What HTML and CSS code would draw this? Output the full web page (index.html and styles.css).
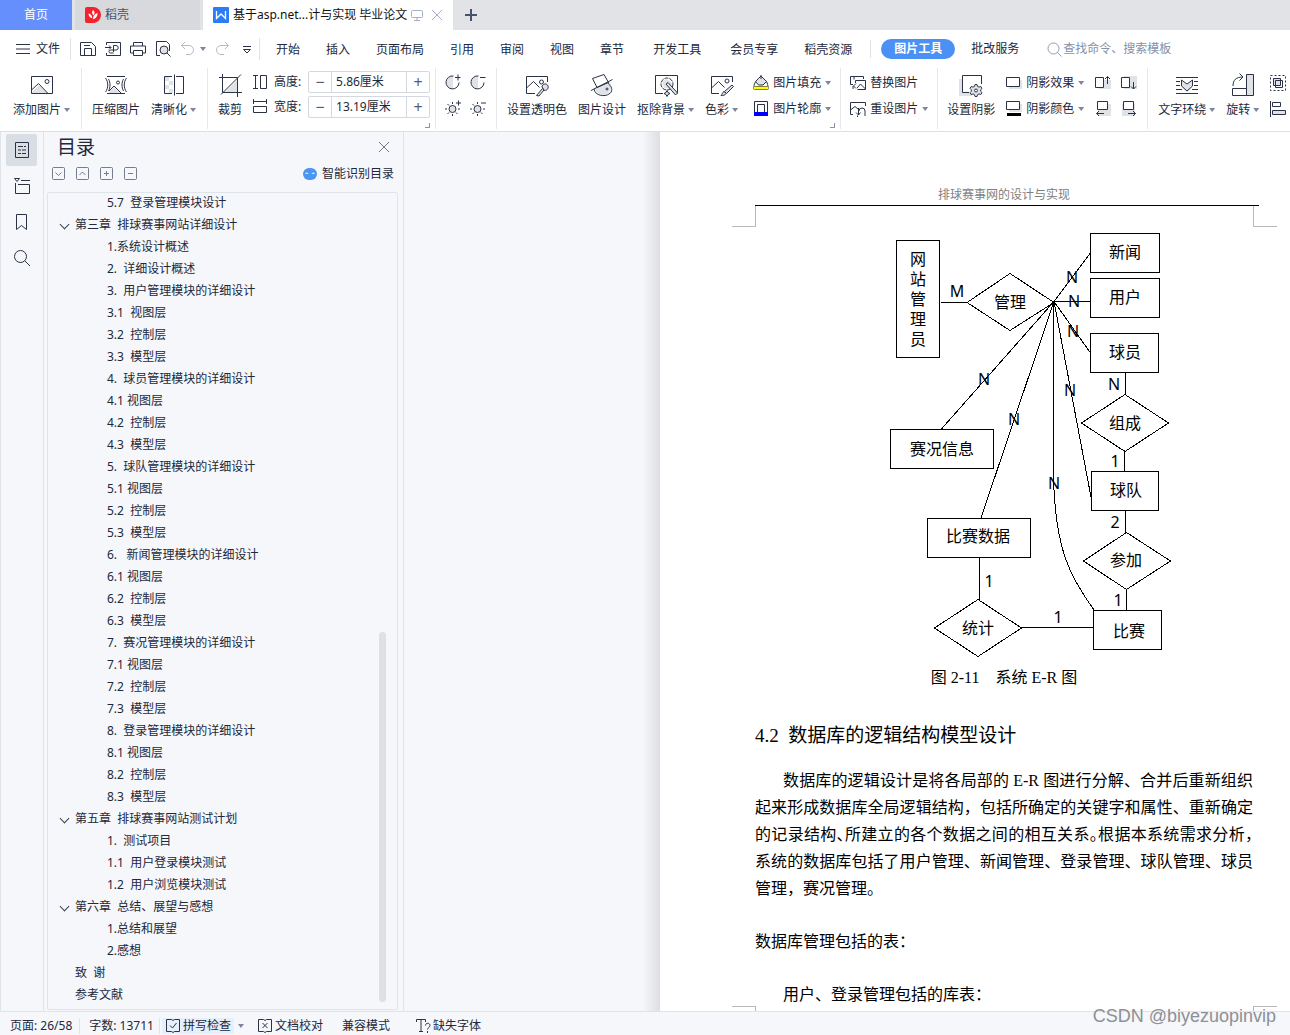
FILE: index.html
```html
<!DOCTYPE html>
<html lang="zh-CN">
<head>
<meta charset="utf-8">
<title>基于asp.net…计与实现 毕业论文</title>
<link rel="stylesheet" href="styles.css">
</head>
<body>
<header class="tabs">
  <button class="tab tab-home">首页</button>
  <button class="tab tab-docer">
    <svg width="16" height="16" viewBox="0 0 16 16"><path d="M0 2a2 2 0 0 1 2-2h6a8 8 0 0 1 0 16H2a2 2 0 0 1-2-2z" fill="#f5222d"/><path d="M8 3c2 1.600 2 3.600.4 5.600C6.700 6.600 6.700 4.600 8 3zM3.500 6.500c2.400.3 3.600 2 3.800 4.800C5 10.800 3.600 9.200 3.500 6.500zM12.500 6c.2 3.200-1.400 5.600-4.600 6.300C8.100 9 9.600 6.800 12.500 6z" fill="#fff"/></svg>
    稻壳</button>
  <div class="tab tab-doc">
    <svg width="16" height="16" viewBox="0 0 16 16"><rect width="16" height="16" rx="1" fill="#2a7df5"/><path d="M3.500 4v7.500L8 7l4.500 4.500V4" fill="none" stroke="#fff" stroke-width="1.300"/></svg>
    <span>基于asp.net...计与实现 毕业论文</span>
    <svg class="screen" width="12" height="12" viewBox="0 0 12 12"><path d="M1.500 1.500h9a1 1 0 0 1 1 1v5a1 1 0 0 1-1 1h-9a1 1 0 0 1-1-1v-5a1 1 0 0 1 1-1zM6 8.500v3M3 11.500h6"/></svg>
    <button class="close" aria-label="关闭"><svg width="12" height="12" viewBox="0 0 12 12"><path d="M1 1l10 10M11 1L1 11"/></svg></button>
  </div>
  <button class="add-tab" aria-label="新建"><svg width="12" height="12" viewBox="0 0 12 12"><path d="M6 0v12M0 6h12"/></svg></button>
</header>

<nav class="menu">
  <button class="file"><svg width="14" height="10" viewBox="0 0 14 10"><path d="M0 .5h14M0 5h14M0 9.500h14"/></svg>文件</button>
  <div class="quick">
    <button aria-label="保存"><svg width="16" height="16" viewBox="0 0 16 16"><path d="M.5 1.500h11l4 4v9H.5zM4.500 14.500v-7h7v7M4 4.500h6" /></svg></button>
    <button aria-label="输出为PDF"><svg width="16" height="16" viewBox="0 0 16 16"><path d="M1.500 4V1.500h14v13h-14V12M0 6.500h6M4 4.500l2 2-2 2M8.500 11V4.500H11a2 2 0 0 1 0 4.500H5.500a1.500 1.500 0 0 0 0 3h3"/></svg></button>
    <button aria-label="打印"><svg width="16" height="16" viewBox="0 0 16 16"><path d="M3.500 5V1.500h9V5M3.500 12h-3V5h15v7h-3M3.500 9.500h9v5h-9z"/></svg></button>
    <button aria-label="打印预览"><svg width="16" height="16" viewBox="0 0 16 16"><path d="M5 14.500H1.500v-14h10l3 3V10M12 12l3.500 3.500"/><circle cx="9" cy="9" r="4" fill="#e0e2e5"/></svg></button>
    <button aria-label="撤销" class="faded"><svg width="16" height="16" viewBox="0 0 16 16"><path d="M5 1L1.500 4.500 5 8M1.500 4.500H9a4.500 4.500 0 0 1 0 9H6"/></svg></button>
    <i class="caret"></i>
    <button aria-label="恢复" class="faded"><svg width="16" height="16" viewBox="0 0 16 16"><path d="M11 1l3.500 3.500L11 8M14.500 4.500H7a4.500 4.500 0 0 0 0 9h3"/></svg></button>
    <button aria-label="更多"><svg width="16" height="16" viewBox="0 0 16 16"><path d="M4 5.500h8M4.500 8.500l3.500 3.500 3.500-3.500z"/></svg></button>
  </div>
  <div class="menu-items">
    <button>开始</button><button>插入</button><button>页面布局</button><button>引用</button><button>审阅</button><button>视图</button><button>章节</button>
    <button class="roomy">开发工具</button><button class="roomy">会员专享</button><button>稻壳资源</button>
  </div>
  <div class="menu-tools">
    <button class="pill">图片工具</button>
    <button>批改服务</button>
  </div>
  <label class="search"><svg width="15" height="15" viewBox="0 0 15 15"><circle cx="6.500" cy="6.500" r="5.500"/><path d="M10.500 10.500l4 4"/></svg><input type="text" placeholder="查找命令、搜索模板" aria-label="查找命令"></label>
</nav>

<section class="ribbon">
  <div class="group">
    <button class="big"><svg width="24" height="24" viewBox="0 0 24 24"><path class="g" d="M2 19l7-7 9 8H2z"/><path d="M1.500 3.500h21v17h-21zM1.500 17l7-6.500 9.500 10"/><circle cx="17" cy="8.500" r="2"/></svg><span>添加图片<i class="caret"></i></span></button>
  </div>
  <div class="group">
    <button class="big"><svg width="24" height="24" viewBox="0 0 24 24"><path class="g" d="M5 19l5-5 6 6H5z"/><path d="M3 3.500h18M3 20.500h18M1.500 5c3 4 3 10 0 14M4.500 6c2 3.500 2 8.500 0 12M22.500 5c-3 4-3 10 0 14M19.500 6c-2 3.500-2 8.500 0 12M5 18l5-5 7 7"/><circle cx="14" cy="9.500" r="1.500"/></svg><span>压缩图片</span></button>
    <button class="big"><svg width="24" height="24" viewBox="0 0 24 24"><path class="g" d="M3 4h4v4H3zM7 8h4v4H7zM3 12h4v4H3zM7 16h4v4H7z"/><path d="M10 3.500H2.500v17H10M12.500 1.500v21M14 3.500h7.500v17H14"/></svg><span>清晰化<i class="caret"></i></span></button>
  </div>
  <div class="group crop">
    <button class="big"><svg width="24" height="24" viewBox="0 0 24 24"><path class="g" d="M7 19L19 7v12z"/><path d="M4.500 1v18.500H24M1 4.500h18.500V24M3 21.500L23 1.500"/></svg><span>裁剪</span></button>
    <div class="sizes">
      <label for="h"><svg width="14" height="16" viewBox="0 0 14 16"><path d="M0 1.500h5M2.500 1.500v13M0 14.500h5M7.500 1.500h6v13h-6z"/></svg>高度:</label>
      <div class="step"><button aria-label="减小高度">−</button><input id="h" type="text" value="5.86厘米"><button aria-label="增大高度">+</button></div>
      <label for="w"><svg width="14" height="16" viewBox="0 0 14 16"><path d="M.5 0v5M.5 2.500h13M13.500 0v5M.5 7.500h13v6H.5z"/></svg>宽度:</label>
      <div class="step"><button aria-label="减小宽度">−</button><input id="w" type="text" value="13.19厘米"><button aria-label="增大宽度">+</button></div>
    </div>
    <i class="corner"></i>
  </div>
  <div class="group tone">
    <button aria-label="增加对比度"><svg width="16" height="16" viewBox="0 0 16 16"><path class="g" d="M8 2v13a6.500 6.500 0 0 1 0-13z"/><path d="M8.500 2a6.500 6.500 0 1 0 5.500 6.500M10 3.500h5.500M13 .5v6"/></svg></button>
    <button aria-label="降低对比度"><svg width="16" height="16" viewBox="0 0 16 16"><path class="g" d="M8 2v13a6.500 6.500 0 0 1 0-13z"/><path d="M8.500 2a6.500 6.500 0 1 0 5.500 6.500M10 3.500h5.500"/></svg></button>
    <button aria-label="增加亮度"><svg width="16" height="16" viewBox="0 0 16 16"><circle class="gs" cx="7.500" cy="9" r="3.500"/><path d="M7.500 2v2M7.500 14v2M0 9h2M13 9h2M2.500 4l1.500 1.500M2.500 14L4 12.500M12.500 14L11 12.500M11 3h5M13.500.5v5"/></svg></button>
    <button aria-label="降低亮度"><svg width="16" height="16" viewBox="0 0 16 16"><circle class="gs" cx="7.500" cy="9" r="3.500"/><path d="M7.500 2v2M7.500 14v2M0 9h2M13 9h2M2.500 4l1.500 1.500M2.500 14L4 12.500M12.500 14L11 12.500M11 3h5"/></svg></button>
  </div>
  <div class="group style">
    <button class="big"><svg width="24" height="24" viewBox="0 0 24 24"><path d="M10 20.500H1.500v-17h21V9M1.500 15l7-6.500 6 6"/><circle cx="16.500" cy="9" r="2"/><path class="gs" d="M11.500 22.500l6-7 1.500 1.500-5 6zM17 14c0-3 4-4 5.500-2s.5 5.500-3 5.500z"/></svg><span>设置透明色</span></button>
    <button class="big"><svg width="24" height="24" viewBox="0 0 24 24"><path class="g" d="M5 15l15-6c2 3 2 8-2 11-5 4-12 1-13-5z"/><path d="M2.500 5.500L14 1.500l4.500 8L7 14.500zM1 17.500L22.500 6.500M4 16c1 7 11 8 15 5 4-2 3-7 1-8.500-1-1.500-2-2-2-3.500"/><circle cx="17" cy="16" r="1"/></svg><span>图片设计</span></button>
    <button class="big"><svg width="24" height="24" viewBox="0 0 24 24"><path d="M9 20.500H1.500v-18h22v18"/><path class="g" d="M8 8l5-2 5 4-2 6-6-1z"/><circle cx="13" cy="11" r="6" stroke-dasharray="4 1"/><path class="gs" d="M12 11l2-1.500L23.500 20l-2 2zM13 17.500l1 2 2 1-2 1-1 2-1-2-2-1 2-1z"/></svg><span>抠除背景<i class="caret"></i></span></button>
    <button class="big"><svg width="24" height="24" viewBox="0 0 24 24"><path d="M9 20.500H1.500v-17h21V9M1.500 15l7-6.500 6 6"/><circle cx="17" cy="8" r="2"/><path class="gs" d="M22 12l1.500 1.500-7 7-2-2zM14 18.500l2 2c-1 2-3 2-5 2 1.500-1 1-3 3-4z"/></svg><span>色彩<i class="caret"></i></span></button>
    <div class="pair">
      <button><svg width="16" height="16" viewBox="0 0 16 16"><path class="g" d="M3 6l6-4 5 4-4 4H6z"/><path d="M2.500 6.500L8 1l5.500 5.500L10 10H5.500zM8 0v4M1 12.500C1 10 1.500 8 3 6.500M15 12.500c0-2-.5-4-1.500-6"/><rect x=".5" y="11.500" width="15" height="3" rx="1" fill="#ff0" stroke="#808040"/></svg>图片填充<i class="caret"></i></button>
      <button><svg width="16" height="16" viewBox="0 0 16 16"><path d="M1.500 11V.5h13V11M4.500 11V3.500h7V11"/><path fill="#00f" stroke="none" d="M1 11h14v4H1z"/></svg>图片轮廓<i class="caret"></i></button>
    </div>
    <i class="corner"></i>
  </div>
  <div class="group change">
    <div class="pair">
      <button><svg width="16" height="16" viewBox="0 0 16 16"><path d="M4 4.500v-3M13.500 4V1.500H.5v8H3M6 8.500L3.500 11 6 13.500M3 11v3M5.500 8V5.500h10v9h-8M7 13l3.500-4 5 5"/></svg>替换图片</button>
      <button><svg width="16" height="16" viewBox="0 0 16 16"><path d="M3 13.500H.5v-12h15V5M.5 9L5 5.500 8 8M7.500 14.500V16M8.500 7v7M6 11.500l2.500 2.500 2-2.500M9 10a3 3 0 0 1 6 0v5"/></svg>重设图片<i class="caret"></i></button>
    </div>
  </div>
  <div class="group shadow">
    <button class="big"><svg width="24" height="24" viewBox="0 0 24 24"><path class="g" d="M0 6h4v14h9v3H0z"/><path d="M10 19.500H3.500v-17h19V11"/><path class="gs" d="M16 11.500h2l.5 1.800 1.500.8 1.800-.6 1.200 1.900-1.300 1.300v1.600l1.300 1.300-1.200 1.900-1.800-.6-1.500.8-.5 1.800h-2l-.5-1.800-1.500-.8-1.800.6-1.200-1.900 1.300-1.300v-1.600L11 15.400l1.200-1.900 1.800.6 1.500-.8z"/><circle cx="17" cy="17.500" r="1.500" fill="#fff"/></svg><span>设置阴影</span></button>
    <div class="pair">
      <button><svg width="16" height="16" viewBox="0 0 16 16"><path class="g" d="M3 5h13v9H3z"/><path fill="#fff" d="M.5 2.500h13v9H.5z"/></svg>阴影效果<i class="caret"></i></button>
      <button><svg width="16" height="16" viewBox="0 0 16 16"><path class="g" d="M3 3h13v8H3z"/><path fill="#fff" d="M.5.5h13v8H.5z"/><path fill="#000" stroke="none" d="M1 12h14v3H1z"/></svg>阴影颜色<i class="caret"></i></button>
    </div>
    <div class="nudges">
      <button aria-label="阴影上移"><svg width="16" height="16" viewBox="0 0 16 16"><path class="g" d="M4 5h12v9H4z"/><path fill="#fff" d="M.5 2.500h8v10h-8z"/><path d="M12.500 9V1.500M10 4l2.500-2.500L15 4"/></svg></button>
      <button aria-label="阴影下移"><svg width="16" height="16" viewBox="0 0 16 16"><path class="g" d="M3 1h13v13H3z"/><path fill="#fff" d="M.5 2.500h8v10h-8z"/><path d="M12.500 7v7M10 11.500l2.500 2.500 2.500-2.500"/></svg></button>
      <button aria-label="阴影左移"><svg width="16" height="16" viewBox="0 0 16 16"><path class="g" d="M3 3h13v12H3z"/><path fill="#fff" d="M2.500.5h10v8h-10z"/><path d="M9 12.500H1.500M4 10l-2.500 2.500L4 15"/></svg></button>
      <button aria-label="阴影右移"><svg width="16" height="16" viewBox="0 0 16 16"><path class="g" d="M1 3h13v12H1z"/><path fill="#fff" d="M2.500.5h10v8h-10z"/><path d="M7 12.500h7.500M12 10l2.500 2.500L12 15"/></svg></button>
    </div>
  </div>
  <div class="group arrange">
    <button class="big"><svg width="24" height="24" viewBox="0 0 24 24"><path class="g" d="M7 8l5 3 5-3v6l-5 5-5-5z"/><path d="M1 4.500h22M1 8.500h4M19 8.500h4M1 12.500h4M19 12.500h4M1 16.500h6M17 16.500h6M1 20.500h22M6.500 7l5.500 4 5.500-4v6L12 18l-5.500-5z"/></svg><span>文字环绕<i class="caret"></i></span></button>
    <button class="big"><svg width="24" height="24" viewBox="0 0 24 24"><path class="gs" d="M15.500 1.500h7v21h-7z"/><path d="M1.500 15.500h14v7h-14zM2 13c0-6 3-9 10-9M8.500.5L12 4 8.500 7.500"/></svg><span>旋转<i class="caret"></i></span></button>
    <div class="pair">
      <button><svg width="16" height="16" viewBox="0 0 16 16"><path stroke-dasharray="2 2" d="M.5.5h15v15H.5z"/><path class="gs" d="M3.500 3.500h7v7h-7z"/><path d="M5.500 5.500h7v7h-7z"/></svg>组合<i class="caret"></i></button>
      <button><svg width="16" height="16" viewBox="0 0 16 16"><path d="M.5 0v16M2.500 1.500h8v4h-8z"/><path class="gs" d="M2.500 9.500h13v4h-13z"/></svg>对齐<i class="caret"></i></button>
    </div>
  </div>
</section>

<main class="work">
  <nav class="rail">
    <button class="on" aria-label="目录"><svg width="18" height="18" viewBox="0 0 18 18"><path d="M2.500 1.500h13v15h-13zM5 5.500h5M11 5.500h2M5 9h3M9 9h4M5 12.500h3M9 12.500h4"/></svg></button>
    <button aria-label="章节"><svg width="18" height="18" viewBox="0 0 18 18"><path d="M1.500 1.500h5l-2.500 3zM8 3.500h9M2.500 6v10.500h14v-9H5"/></svg></button>
    <button aria-label="书签"><svg width="18" height="18" viewBox="0 0 18 18"><path d="M3.500 1.500h10v15l-5-4-5 4z"/></svg></button>
    <button aria-label="查找"><svg width="18" height="18" viewBox="0 0 18 18"><circle cx="7.500" cy="7.500" r="6"/><path d="M12 12l5 5"/></svg></button>
  </nav>

  <aside class="outline">
    <div class="outline-head"><h2>目录</h2><button aria-label="关闭目录"><svg width="10" height="10" viewBox="0 0 10 10"><path d="M0 0l10 10M10 0L0 10"/></svg></button></div>
    <div class="outline-tools">
      <button aria-label="展开"><svg width="14" height="14" viewBox="0 0 14 14"><rect x=".5" y=".5" width="12" height="12" rx="1"/><path d="M3.500 5.500l3 3 3-3"/></svg></button>
      <button aria-label="收起"><svg width="14" height="14" viewBox="0 0 14 14"><rect x=".5" y=".5" width="12" height="12" rx="1"/><path d="M3.500 8l3-3 3 3"/></svg></button>
      <button aria-label="增加级别"><svg width="14" height="14" viewBox="0 0 14 14"><rect x=".5" y=".5" width="12" height="12" rx="1"/><path d="M4 6.500h5M6.500 4v5"/></svg></button>
      <button aria-label="减少级别"><svg width="14" height="14" viewBox="0 0 14 14"><rect x=".5" y=".5" width="12" height="12" rx="1"/><path d="M4 6.500h5"/></svg></button>
      <button class="smart"><svg width="14" height="12" viewBox="0 0 14 12"><rect width="14" height="12" rx="6" fill="#4b95f3" stroke="none"/><path d="M2.500 6c.5-1.500 2-1.500 2.500 0M9 6c.5-1.500 2-1.500 2.500 0" stroke="#fff"/></svg>智能识别目录</button>
    </div>
    <div class="toc">
      <ul>
        <li class="sub"><a href="#">5.7  登录管理模块设计</a></li>
        <li class="chapter"><a href="#">第三章  排球赛事网站详细设计</a></li>
        <li class="sub"><a href="#">1.系统设计概述</a></li>
        <li class="sub"><a href="#">2.  详细设计概述</a></li>
        <li class="sub"><a href="#">3.  用户管理模块的详细设计</a></li>
        <li class="sub"><a href="#">3.1  视图层</a></li>
        <li class="sub"><a href="#">3.2  控制层</a></li>
        <li class="sub"><a href="#">3.3  模型层</a></li>
        <li class="sub"><a href="#">4.  球员管理模块的详细设计</a></li>
        <li class="sub"><a href="#">4.1 视图层</a></li>
        <li class="sub"><a href="#">4.2  控制层</a></li>
        <li class="sub"><a href="#">4.3  模型层</a></li>
        <li class="sub"><a href="#">5.  球队管理模块的详细设计</a></li>
        <li class="sub"><a href="#">5.1 视图层</a></li>
        <li class="sub"><a href="#">5.2  控制层</a></li>
        <li class="sub"><a href="#">5.3  模型层</a></li>
        <li class="sub"><a href="#">6.   新闻管理模块的详细设计</a></li>
        <li class="sub"><a href="#">6.1 视图层</a></li>
        <li class="sub"><a href="#">6.2  控制层</a></li>
        <li class="sub"><a href="#">6.3  模型层</a></li>
        <li class="sub"><a href="#">7.  赛况管理模块的详细设计</a></li>
        <li class="sub"><a href="#">7.1 视图层</a></li>
        <li class="sub"><a href="#">7.2  控制层</a></li>
        <li class="sub"><a href="#">7.3  模型层</a></li>
        <li class="sub"><a href="#">8.  登录管理模块的详细设计</a></li>
        <li class="sub"><a href="#">8.1 视图层</a></li>
        <li class="sub"><a href="#">8.2  控制层</a></li>
        <li class="sub"><a href="#">8.3  模型层</a></li>
        <li class="chapter"><a href="#">第五章  排球赛事网站测试计划</a></li>
        <li class="sub"><a href="#">1.  测试项目</a></li>
        <li class="sub"><a href="#">1.1  用户登录模块测试</a></li>
        <li class="sub"><a href="#">1.2  用户浏览模块测试</a></li>
        <li class="chapter"><a href="#">第六章  总结、展望与感想</a></li>
        <li class="sub"><a href="#">1.总结和展望</a></li>
        <li class="sub"><a href="#">2.感想</a></li>
        <li><a href="#">致  谢</a></li>
        <li><a href="#">参考文献</a></li>
      </ul>
      <div class="thumb"></div>
    </div>
  </aside>

  <section class="canvas">
    <article class="page">
      <div class="running-head">排球赛事网的设计与实现</div>
      <div class="marks top"><i></i><i></i></div>
      <figure>
        <svg class="er" width="284" height="428" viewBox="0 0 284 428" role="img" aria-label="系统 E-R 图">
          <g class="lines">
            <path d="M50.500 72.500H77M164 71.500L200.500 23M164 71.500H200M164 71.500L200.500 123M164 71.500L51 199.500M164 71.500L91 288M164 71.500L201 267M163.500 71.500V250C166 318 178 344 204 380M235.500 142V165M234.500 220V241M235.500 280V303M236.500 359V380M89.500 327V370M132 397.500H203"/>
            <path class="fill" d="M6.500 10.500h43v117h-43zM200.500 3.500h69v39h-69zM200.500 48.500h69v39h-69zM200.500 103.500h68v39h-68zM.5 199.500h103v39H.5zM201.500 241.500h67v39h-67zM37.500 288.500h103v39h-103zM203.500 380.500h68v39h-68z"/>
            <path d="M77 72.500L120 43.500 164 72.500 120 100.500zM191.500 193L235 164.500 278.500 193 235 221.500zM193.500 331L236.500 302.500 280.500 331 236.500 359.500zM44.500 398L88 369.500 131.500 398 88 426.500z"/>
          </g>
          <g class="names">
            <text x="28" y="35">网</text><text x="28" y="55">站</text><text x="28" y="75">管</text><text x="28" y="95">理</text><text x="28" y="115">员</text>
            <text x="120" y="78">管理</text><text x="235" y="28">新闻</text><text x="235" y="73">用户</text><text x="235" y="128">球员</text>
            <text x="235" y="199">组成</text><text x="52" y="225">赛况信息</text><text x="236" y="266">球队</text><text x="88" y="312">比赛数据</text>
            <text x="236" y="336">参加</text><text x="88" y="404">统计</text><text x="239" y="407">比赛</text>
            <text x="67" y="67">M</text><text x="182" y="53">N</text><text x="184" y="77">N</text><text x="183" y="107">N</text><text x="94" y="155">N</text><text x="124" y="195">N</text><text x="180" y="166">N</text><text x="164" y="259">N</text><text x="224" y="160">N</text>
            <text x="225" y="237">1</text><text x="225" y="298">2</text><text x="228" y="376">1</text><text x="99" y="357">1</text><text x="168" y="393">1</text>
          </g>
        </svg>
        <figcaption>图 2-11　系统 E-R 图</figcaption>
      </figure>
      <h1>4.2&nbsp; 数据库的逻辑结构模型设计</h1>
      <p><span class="first">数据库的逻辑设计是将各局部的 E-R 图进行分解、合并后重新组织</span><span>起来形成数据库全局逻辑结构，包括所确定的关键字和属性、重新确定</span><span class="half">的记录结构、所建立的各个数据之间的相互关系。根据本系统需求分析，</span><span>系统的数据库包括了用户管理、新闻管理、登录管理、球队管理、球员</span><span class="last">管理，赛况管理。</span></p>
      <p>数据库管理包括的表：</p>
      <p class="first">用户、登录管理包括的库表：</p>
      <div class="marks bottom"><i></i><i></i></div>
    </article>
  </section>
</main>

<footer class="status">
  <span class="cell">页面: 26/58</span>
  <span class="cell">字数: 13711</span>
  <button class="spell"><svg width="16" height="16" viewBox="0 0 16 16"><path d="M6.500 1.500h-5v12h5l1.500 1 1.500-1h5v-12h-5L8 2.500zM5 7.500l2.500 2.500L11.500 5"/></svg><span>拼写检查</span></button>
  <i class="caret"></i>
  <button class="proof"><svg width="16" height="16" viewBox="0 0 16 16"><path d="M6.500 1.500h-5v12h5l1.500 1 1.500-1h5v-12h-5L8 2.500zM5.500 5l5 5M10.500 5l-5 5"/></svg>文档校对</button>
  <button class="compat">兼容模式</button>
  <button class="fonts"><svg width="16" height="16" viewBox="0 0 16 16"><path d="M1.500 4V1.500h9V4M6 1.500v12M4 13.500h4M10.500 7.500c0-3 4.500-3 4.500 0 0 2-2.500 2-2.500 4M12.500 13v2"/></svg>缺失字体</button>
</footer>
<div class="watermark">CSDN @biyezuopinvip</div>
</body>
</html>
```
FILE: styles.css
```css
* { box-sizing: border-box; }
body {
  margin: 0;
  min-height: 100vh;
  display: flex;
  flex-direction: column;
  position: relative;
  overflow-x: hidden;
  background: #f5f7fa;
  color: #22283a;
  font: 12px/16px "Noto Sans", "Noto Sans CJK SC", sans-serif;
}
button, input { font: inherit; color: inherit; border: 0; padding: 0; margin: 0; background: none; white-space: nowrap; }
svg { flex: none; fill: none; stroke: #2b3245; stroke-width: 1; }
svg text { stroke: none; }
.g { fill: #dfe2e6; stroke: none; }
.gs { fill: #dfe2e6; }
.caret {
  display: inline-block;
  flex: none;
  width: 6px;
  height: 4px;
  background: #7c869c;
  clip-path: polygon(0 0, 100% 0, 50% 100%);
}

/* Window tabs */
.tabs { display: flex; height: 30px; gap: 3px; background: #e2e3e6; }
.tab { display: flex; align-items: center; }
.tab svg { stroke: none; }
.tab-home { width: 72px; justify-content: center; background: #648ffc; color: #fff; }
.tab-docer { width: 125px; padding-left: 10px; gap: 4px; background: #d8d9dc; color: #4a5266; }
.tab-doc { width: 250px; padding-left: 10px; gap: 4px; background: #fff; color: #111; }
.tab-doc span { white-space: nowrap; }
.tab-doc .screen, .tab-doc .close svg { stroke: #a3afc4; }
.close { display: flex; margin-left: 4px; }
.add-tab { display: flex; align-items: center; margin-left: 9px; }
.add-tab svg { stroke: #45536e; stroke-width: 2; }

/* Menu */
.menu { display: flex; align-items: center; height: 38px; padding-left: 16px; background: #fff; }
.file { display: flex; align-items: center; gap: 6px; }
.quick { display: flex; align-items: center; gap: 9px; height: 22px; margin-left: 10px; padding: 0 4px 0 9px; border: solid #e0e3e8; border-width: 0 1px; }
.quick button { display: flex; }
.quick .caret { margin: 0 -1px 0 -5px; }
.faded svg { stroke: #b5bac4; }
.menu-items { display: flex; padding: 2px 18px 0 16px; gap: 26px; border-right: 1px solid #e0e3e8; }
.roomy { margin-left: 3px; }
.menu-tools { display: flex; align-items: center; gap: 16px; margin-left: 10px; }
.pill { height: 20px; padding: 0 13px; border-radius: 10px; background: #4a90f5; color: #fff; font-weight: bold; }
.search { display: flex; align-items: center; gap: 1px; margin-left: 28px; flex: 1; }
.search svg { stroke: #8f9cb5; }
.search input { width: 130px; }
.search input::placeholder { color: #8490a8; opacity: 1; }

/* Ribbon */
.ribbon { display: flex; height: 64px; overflow: hidden; background: #fff; border-bottom: 1px solid #dddfe3; }
.group { display: flex; flex: none; position: relative; gap: 11px; height: 61px; padding: 0 11px 0 10px; border-left: 1px solid #e6e8ec; }
.group:first-child { padding: 0 11px 0 13px; border: 0; }
.big { display: flex; flex-direction: column; align-items: center; gap: 5px; padding-top: 5px; height: 56px; }
.big span { display: flex; align-items: center; }
.big .caret { margin-left: 3px; }
.corner { position: absolute; right: 5px; bottom: 1px; width: 5px; height: 5px; border: solid #8a94aa; border-width: 0 1px 1px 0; }
.group.crop { padding-right: 5px; }
.sizes { display: grid; grid-template-columns: 55px 122px; gap: 3px 0; align-content: start; padding-top: 3px; }
.sizes label { display: flex; align-items: center; gap: 7px; }
.step { display: flex; height: 22px; border: 1px solid #d4d8df; border-radius: 2px; }
.step button { width: 22px; font-size: 16px; color: #555e70; }
.step input { width: 76px; padding-left: 4px; border: solid #d4d8df; border-width: 0 1px; }
.group.tone { display: grid; grid-template-columns: 16px 16px; grid-template-rows: 16px 16px; gap: 10px 9px; padding: 6px 10px 0 9px; }
.tone button, .nudges button { display: flex; }
.pair { display: grid; grid-template-rows: 16px 16px; gap: 10px; padding-top: 7px; }
.pair button { display: flex; align-items: center; gap: 4px; }
.style .pair { margin-left: 4px; }
.group.style { padding-right: 9px; }
.group.change { padding: 0 9px; }
.nudges { display: grid; grid-template-columns: 16px 16px; grid-template-rows: 16px 16px; gap: 10px; padding: 7px 0 0; }
.group.shadow { padding: 0 10px 0 9px; }

/* Work area */
.work { display: flex; flex: 1; }
.rail { width: 44px; padding: 2px 6px 2px 5px; display: flex; flex-direction: column; gap: 4px; border: solid #e0e3e8; border-width: 0 1px; }
.rail button { display: flex; align-items: center; justify-content: center; height: 32px; border-radius: 2px; }
.rail .on { background: #d9dde4; }
.outline { width: 360px; padding: 0 5px 0 3px; display: flex; flex-direction: column; border-right: 1px solid #e0e3e8; }
.outline-head { display: flex; align-items: center; justify-content: space-between; height: 29px; padding: 0 9px 0 10px; }
.outline-head h2 { margin: 0; font-size: 19px; line-height: 28px; font-weight: normal; }
.outline-head svg { stroke: #6f7889; }
.outline-head button { display: flex; }
.outline-tools { display: flex; align-items: center; gap: 10px; height: 26px; margin-bottom: 5px; padding-left: 5px; }
.outline-tools button { display: flex; }
.outline-tools svg { stroke: #747d8e; }
.outline-tools .smart { align-items: center; gap: 5px; margin: 0 4px 0 auto; }
.toc { display: flex; flex: 1; justify-content: space-between; margin-bottom: 1px; padding-right: 11px; border: 1px solid #dfe3ea; border-radius: 2px; }
.toc ul { margin: 0; padding: 0 0 0 27px; list-style: none; }
.toc li { height: 22px; line-height: 20px; white-space: pre; }
.toc a { color: inherit; text-decoration: none; }
.toc .sub { padding-left: 32px; }
.chapter::before { content: ""; display: inline-block; width: 6px; height: 6px; margin: 0 7px 3px -14px; border: solid #39435a; border-width: 0 1px 1px 0; transform: rotate(45deg); vertical-align: middle; }
.thumb { width: 7px; height: 370px; margin: auto 0 7px; border-radius: 4px; background: #dfe0e3; }

/* Document */
.canvas { flex: 1; display: flex; min-width: 0; padding-left: 239px; }
.canvas::before { content: ""; width: 17px; background: linear-gradient(to right, #f5f7fa, #dcdee1); }
.page { flex: 1; min-width: 630px; padding: 55px 12px 0 72px; background: #fff; color: #000; font: 16px/27px "Liberation Serif", "Noto Sans CJK SC", serif; }
.running-head { width: 504px; height: 19px; margin-left: 23px; padding-right: 6px; border-bottom: 1px solid #000; font-size: 12px; line-height: 16px; text-align: center; color: #808080; }
.marks { display: flex; justify-content: space-between; width: 545px; }
.marks i { width: 24px; border: 0 solid #b8b8b8; }
.marks.top i { height: 21px; border-width: 0 1px 1px 0; }
.marks.top i + i { border-width: 0 0 1px 1px; }
.marks.bottom i { height: 5px; border-width: 1px 1px 0 0; }
.marks.bottom i + i { border-width: 1px 0 0 1px; }
figure { width: 498px; margin: 3px 0 0 23px; }
.er { display: block; margin-left: 135px; overflow: visible; }
.lines { fill: none; stroke: #000; shape-rendering: crispEdges; }
.lines .fill { fill: #fff; }
.names { fill: #000; font: 16px "Noto Sans", "Noto Sans CJK SC", sans-serif; text-anchor: middle; }
figcaption { margin-top: 6px; text-align: center; }
h1 { margin: 31px 0 17px 23px; font-size: 19px; line-height: 28px; font-weight: normal; }
.page p { width: 498px; margin: 0 0 26px 23px; white-space: nowrap; }
.page p span { display: block; text-align: justify; text-align-last: justify; }
.page .first { padding-left: 28px; }
.page p .half { font-feature-settings: "halt"; }
.page p .last { text-align-last: left; }
.page p.first { margin-bottom: 0; }
.marks.bottom { margin-top: -2px; }

/* Status bar */
.status { display: flex; align-items: center; height: 24px; padding: 5px 0 0 10px; border-top: 1px solid #e0e3e8; }
.cell { padding-right: 7px; margin-right: 9px; border-right: 1px solid #e0e3e8; }
.cell + .cell { padding-right: 5px; margin-right: 2px; }
.status button { display: flex; align-items: center; gap: 2px; }
.spell { padding: 0 3px; margin-right: 4px; background: #e6effc; }
.proof { margin-left: 13px; }
.compat { margin-left: 19px; }
.fonts { margin-left: 25px; }
.watermark { position: absolute; right: 14px; bottom: 7px; font: 18px/24px "Liberation Sans", sans-serif; color: #8e9095; }
```
